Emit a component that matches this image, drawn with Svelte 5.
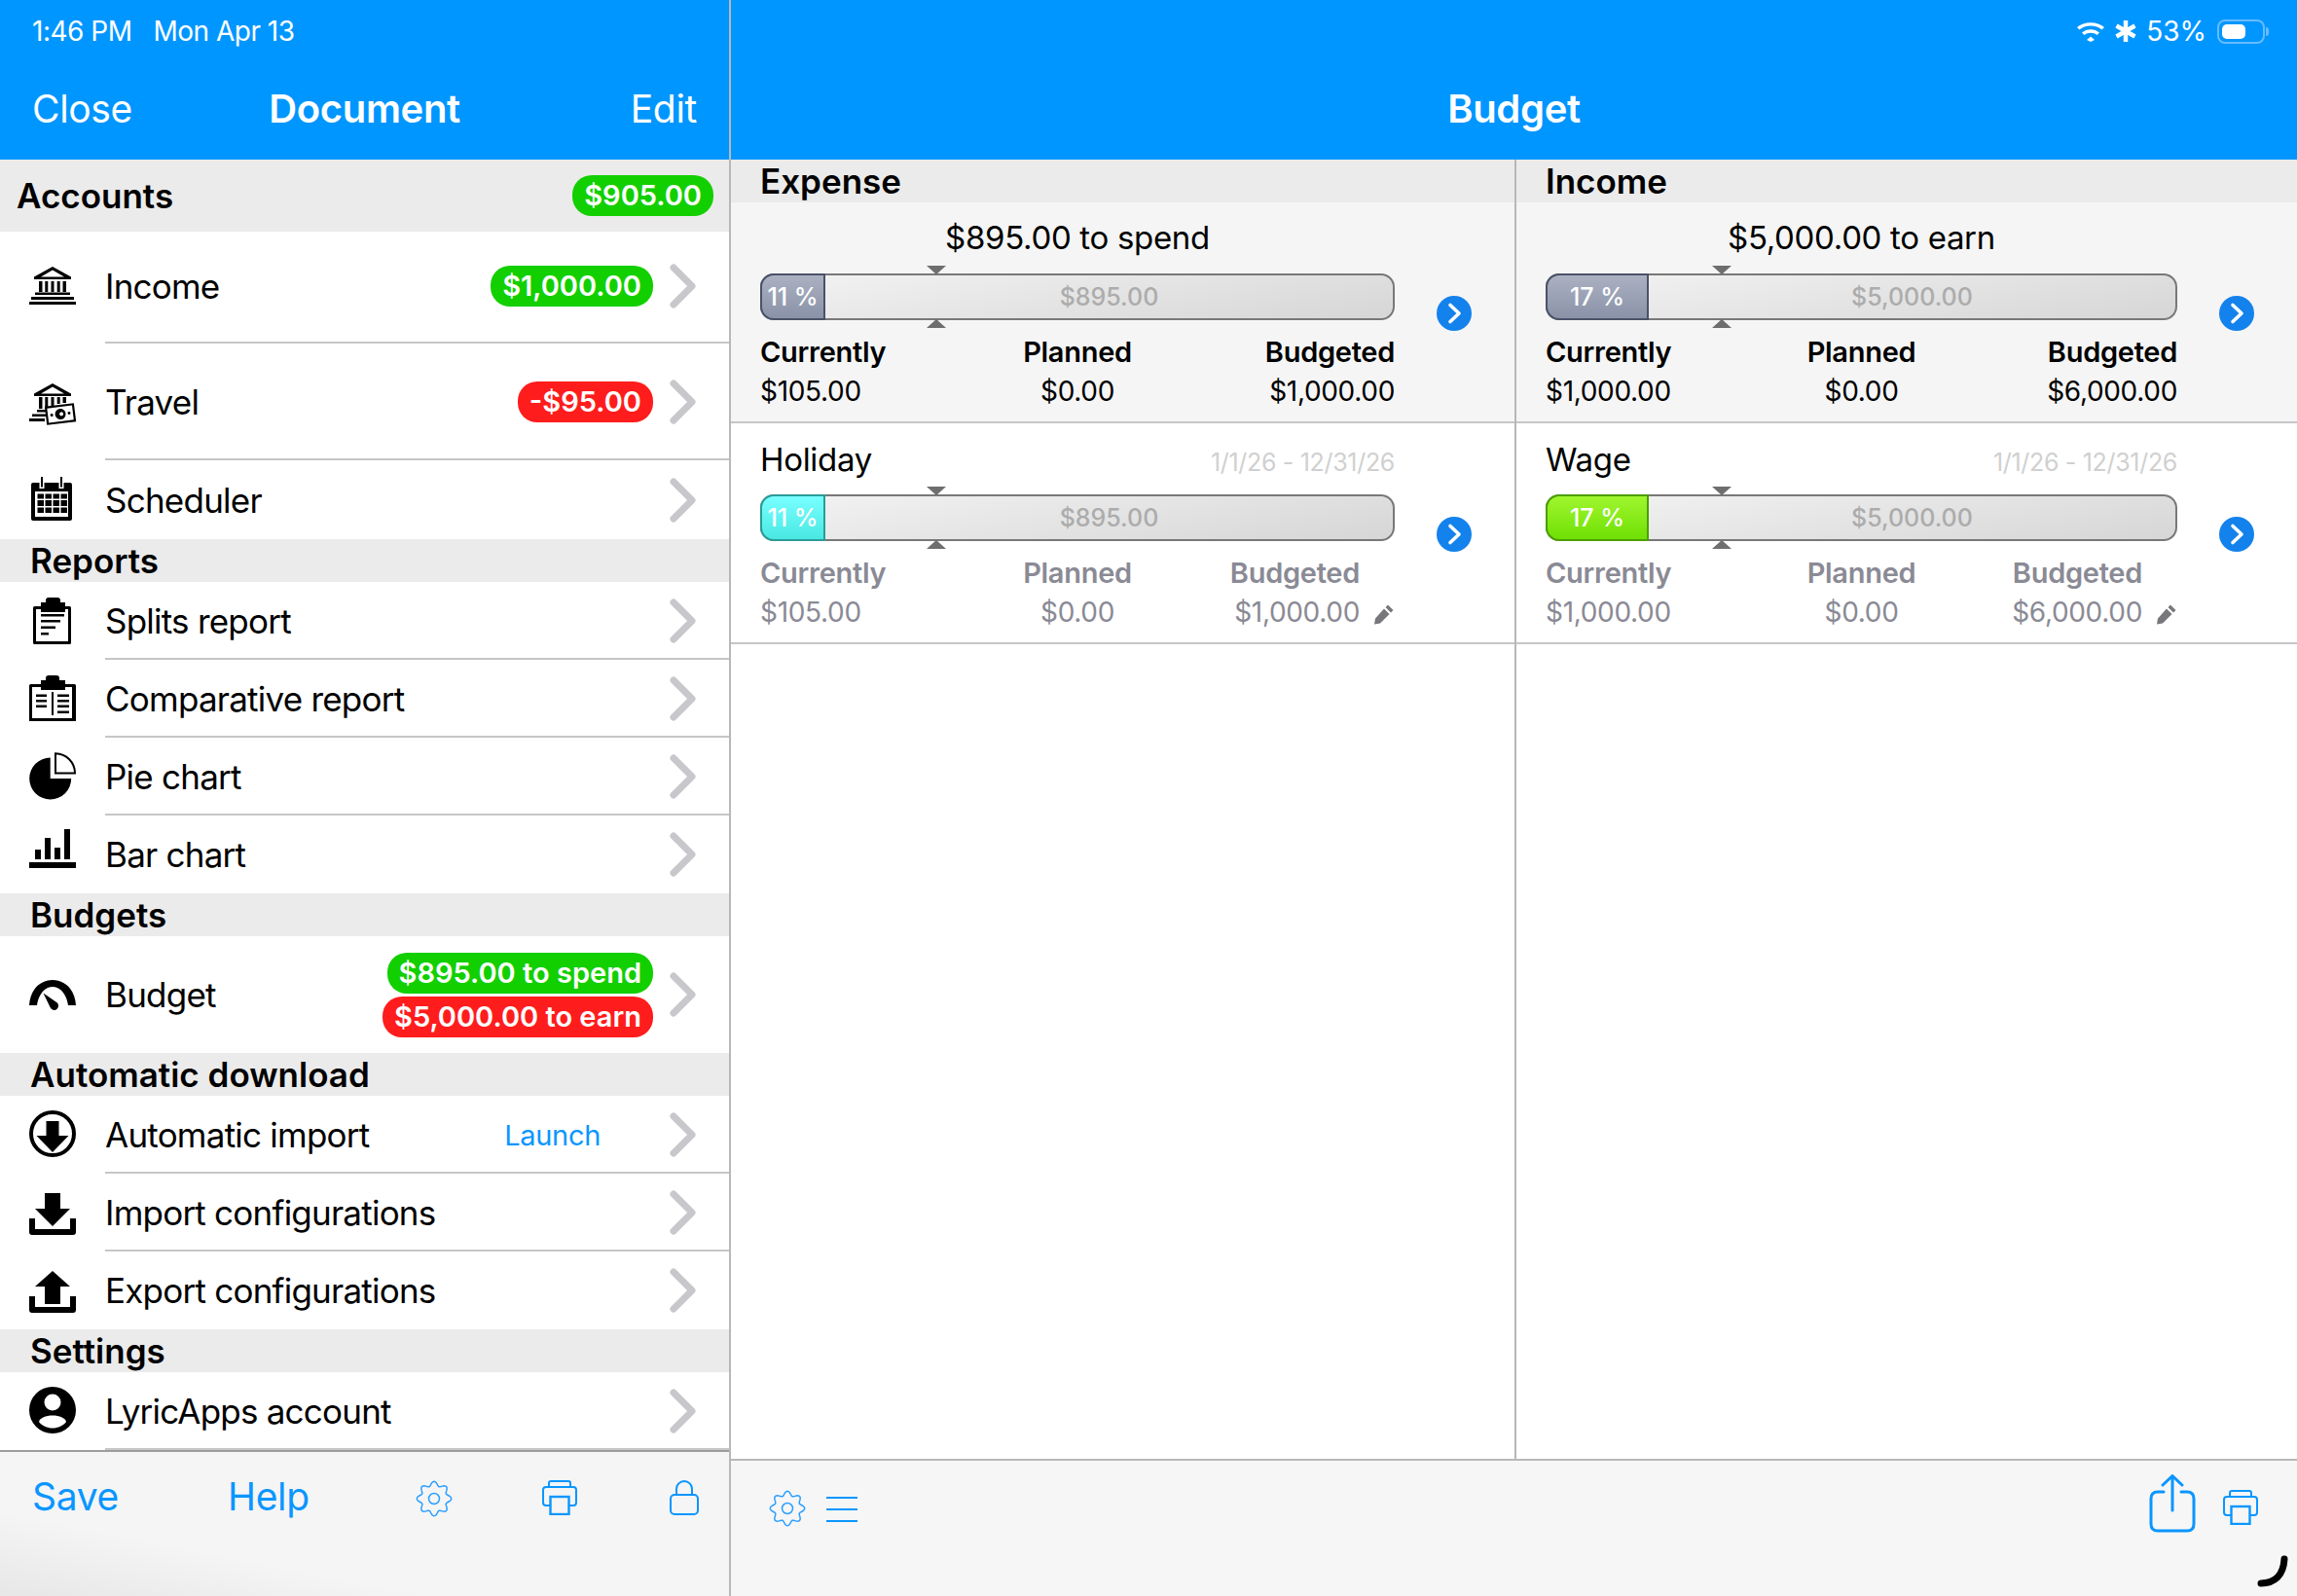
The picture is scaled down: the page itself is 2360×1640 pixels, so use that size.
<script>
	const sections = [
		{
			title: 'Accounts',
			lead: true,
			total: '$905.00',
			rows: [
				{ label: 'Income', icon: 'bank', h: 115, lift: true, badges: [{ text: '$1,000.00', tone: 'green' }] },
				{ label: 'Travel', icon: 'bankcash', h: 120, badges: [{ text: '-$95.00', tone: 'red' }] },
				{ label: 'Scheduler', icon: 'calendar', h: 81, last: true }
			]
		},
		{
			title: 'Reports',
			rows: [
				{ label: 'Splits report', icon: 'clip', h: 80 },
				{ label: 'Comparative report', icon: 'compare', h: 80 },
				{ label: 'Pie chart', icon: 'pie', h: 80 },
				{ label: 'Bar chart', icon: 'bars', h: 80, last: true }
			]
		},
		{
			title: 'Budgets',
			rows: [
				{
					label: 'Budget',
					icon: 'gauge',
					h: 120,
					last: true,
					badges: [
						{ text: '$895.00 to spend', tone: 'green' },
						{ text: '$5,000.00 to earn', tone: 'red' }
					]
				}
			]
		},
		{
			title: 'Automatic download',
			rows: [
				{ label: 'Automatic import', icon: 'circledown', h: 80, action: 'Launch' },
				{ label: 'Import configurations', icon: 'import', h: 80 },
				{ label: 'Export configurations', icon: 'export', h: 80, last: true }
			]
		},
		{
			title: 'Settings',
			rows: [{ label: 'LyricApps account', icon: 'user', h: 80 }]
		}
	];

	const columns = [
		{
			title: 'Expense',
			summary: '$895.00 to spend',
			pct: '11 %',
			fillWidth: 67,
			left: '$895.00',
			currently: '$105.00',
			budgeted: '$1,000.00',
			itemName: 'Holiday',
			itemTone: 'cyan'
		},
		{
			title: 'Income',
			summary: '$5,000.00 to earn',
			pct: '17 %',
			fillWidth: 106,
			left: '$5,000.00',
			currently: '$1,000.00',
			budgeted: '$6,000.00',
			itemName: 'Wage',
			itemTone: 'lime'
		}
	];

	// wavy 8 lobe outline of the settings gear
	function gearPath(cx, cy, r, amp) {
		let d = '';
		for (let i = 0; i < 96; i++) {
			const a = (i / 96) * Math.PI * 2 - Math.PI / 2;
			const rr = r + amp * Math.cos(8 * (a + Math.PI / 2));
			d += (i ? 'L' : 'M') + (cx + rr * Math.cos(a)).toFixed(2) + ' ' + (cy + rr * Math.sin(a)).toFixed(2);
		}
		return d + 'Z';
	}
</script>

{#snippet rowIcon(name)}
	<svg class="row-icon" viewBox="0 0 48 48" width="48" height="48" fill="#000">
		{#if name === 'bank'}
			<path d="M24 5 5 15.500V18h38v-2.500zM24 8.500 12 15.500h24z" fill-rule="evenodd" />
			<path d="M10 20h3.500v11H10zM16.300 20h3v11h-3zM22.500 20h3v11h-3zM28.700 20h3v11h-3zM34.500 20H38v11h-3.500zM6 31.500h36V34H6zM2 36h44v3H2zM0 41h48v3H0z" />
		{:else if name === 'bankcash'}
			<path d="M24 6 5 16.500V19h38v-2.500zM24 9.500 12 16.500h24z" fill-rule="evenodd" />
			<path d="M10 20h3.500v12H10zM16.300 20h3v12h-3zM22.500 20h3v9h-3zM28.700 20h3v7h-3zM34.500 20H38v6h-3.500zM8 33h11v2.500H8zM3 37.500h14v2.500H3zM0 42h16v3H0z" />
			<g transform="rotate(-7 32 37)">
				<rect x="18" y="29" width="28" height="17" fill="#fff" stroke="#000" stroke-width="2.200" />
				<circle cx="32" cy="37.500" r="5.500" />
				<circle cx="33" cy="37.500" r="2" fill="#fff" />
				<circle cx="23" cy="37.500" r="1.500" />
				<circle cx="41" cy="37.500" r="1.500" />
			</g>
		{:else if name === 'calendar'}
			<path d="M4 7h38q2 0 2 2v35q0 2-2 2H4q-2 0-2-2V9q0-2 2-2zM6 16v26h34V16z" fill-rule="evenodd" />
			<path d="M10.500 3.500h5V13h-5zM30.500 3.500h5V13h-5z" fill="#fff" />
			<path d="M12 1h2v10.500h-2zM32 1h2v10.500h-2zM8.500 18.500h6.500v5H8.500zM16.500 18.500H23v5h-6.500zM24.500 18.500H31v5h-6.500zM32.500 18.500H39v5h-6.500zM8.500 25h6.500v6H8.500zM16.500 25H23v6h-6.500zM24.500 25H31v6h-6.500zM32.500 25H39v6h-6.500zM8.500 32.500h6.500V38H8.500zM16.500 32.500H23V38h-6.500zM24.500 32.500H31V38h-6.500zM32.500 32.500H39V38h-6.500z" />
		{:else if name === 'clip'}
			<path d="M5.500 10H12V6h5V4q0-3 3-3h9q3 0 3 3v2h5v4h4.500Q43 10 43 11.500v36q0 1.500-1.500 1.500h-36Q4 49 4 47.500v-36Q4 10 5.500 10zM7 13v33h33V13h-3v3H12v-3z" fill-rule="evenodd" />
			<path d="M12 18h24v2.500H12zM12 24h20v2.500H12zM12 30.500h15V33H12zM12 37h8v2.500h-8z" />
		{:else if name === 'compare'}
			<path d="M1.500 10H12V6h5V4q0-3 3-3h8q3 0 3 3v2h6v4h9.500q1.500 0 1.500 1.500V48H0V11.500Q0 10 1.500 10zM3 13v32h41V13h-7v3H12v-3z" fill-rule="evenodd" />
			<path d="M23 18h2v24h-2zM7 20.500h11V23H7zM7 26h11v2.500H7zM7 31.500h11V34H7zM29 20.500h12V23H29zM29 26h12v2.500H29zM29 31.500h12V34H29zM29 37.500h12V40H29z" />
		{:else if name === 'pie'}
			<path d="M21.700 5.500V27h21.500A21.500 21.500 0 1 1 21.700 5.500z" />
			<path d="M27 1.200V21.500h20A20.300 20.300 0 0 0 27 1.200z" fill="#fff" stroke="#000" stroke-width="2" />
		{:else if name === 'bars'}
			<path d="M6 20h6v10H6zM16 8h6v22h-6zM26 18h6v12h-6zM36-1h6v31h-6zM0 33h48v6H0z" />
		{:else if name === 'gauge'}
			<path d="M0 36C1 20 11 10 24 10s23 10 24 26h-8C38.500 25 32 17 24 17S9.500 25 8 36z" />
			<path d="M14.500 23.500 27.500 32.500a4.400 4.400 0 1 1-6 5.500z" />
		{:else if name === 'circledown'}
			<circle cx="24" cy="24" r="22" fill="none" stroke="#000" stroke-width="4" />
			<path d="M17.500 11h13v15h10L24 43 7.500 26h10z" />
		{:else if name === 'import'}
			<path d="M16 5h16v16h10L24 39 6 21h10z" />
			<path d="M0 31h6v11h36V31h6v14q0 3-3 3H3q-3 0-3-3z" />
		{:else if name === 'export'}
			<path d="M24 5l18 16H32v18H16V21H6z" />
			<path d="M0 31h6v11h36V31h6v14q0 3-3 3H3q-3 0-3-3z" />
		{:else if name === 'user'}
			<circle cx="24" cy="24" r="24" />
			<circle cx="24" cy="16" r="8.500" fill="#fff" />
			<path d="M10 36c1-4 7-6.500 14-6.500s13 2.500 14 6.500c-3 4-8.500 6.500-14 6.500S13 40 10 36z" fill="#fff" />
		{/if}
	</svg>
{/snippet}

{#snippet printerIcon()}
	<svg class="tool-svg" viewBox="0 0 36 36" width="36" height="36" fill="none" stroke="#0a96ff" stroke-width="2">
		<path d="M7 7V3q0-2 2-2h18q2 0 2 2v4" />
		<path d="M8 26H4q-3 0-3-3V10q0-3 3-3h28q3 0 3 3v13q0 3-3 3h-4" />
		<rect x="8.500" y="17" width="19" height="18" stroke-width="2.400" />
	</svg>
{/snippet}

{#snippet gearIcon()}
	<svg class="tool-svg" viewBox="0 0 38 38" width="38" height="38" fill="none" stroke="#2c9fff" stroke-width="1.500">
		<path d={gearPath(19, 19, 15.500, 2.200)} />
		<circle cx="19" cy="19" r="5.500" />
	</svg>
{/snippet}

{#snippet budgetBar(pct, fillWidth, left, tone)}
	<div class="bar">
		<span class="marker marker-top"></span>
		<span class="marker marker-bottom"></span>
		<div class="fill {tone}" style="width: {fillWidth}px">{pct}</div>
		<div class="remain">{left}</div>
	</div>
{/snippet}

{#snippet disclosure()}
	<svg class="more" viewBox="0 0 36 36" width="36" height="36">
		<circle cx="18" cy="18" r="18" fill="#1482ec" />
		<path d="M14 9.500 23 18l-9 8.500" fill="none" stroke="#fff" stroke-width="3.600" stroke-linecap="round" stroke-linejoin="round" />
	</svg>
{/snippet}

<div class="app">
	<aside class="side">
		<header class="nav">
			<div class="status"><span>1:46 PM</span><span class="date">Mon Apr 13</span></div>
			<div class="navbar">
				<span>Close</span>
				<strong class="nav-title">Document</strong>
				<span class="nav-end">Edit</span>
			</div>
		</header>

		<div class="list">
			{#each sections as section}
				<div class="section-head" class:lead={section.lead}>
					<span>{section.title}</span>
					{#if section.total}<span class="badge green">{section.total}</span>{/if}
				</div>
				{#each section.rows as row}
					<div class="row" class:last={row.last} class:lift={row.lift} style="height: {row.h}px">
						{@render rowIcon(row.icon)}
						<span class="row-label">{row.label}</span>
						{#if row.action}<span class="action">{row.action}</span>{/if}
						{#if row.badges}
							<div class="badges">
								{#each row.badges as b}<span class="badge {b.tone}">{b.text}</span>{/each}
							</div>
						{/if}
						<svg class="chev" viewBox="0 0 27 46" width="27" height="46">
							<path d="M4 4l19 19L4 42" fill="none" stroke="#c7c7cc" stroke-width="7" stroke-linecap="round" stroke-linejoin="round" />
						</svg>
					</div>
				{/each}
			{/each}
		</div>

		<footer class="side-tools">
			<span class="tool-text save">Save</span>
			<span class="tool-text help">Help</span>
			<span class="gear-slot">{@render gearIcon()}</span>
			<span class="print-slot">{@render printerIcon()}</span>
			<svg class="tool-svg" viewBox="0 0 30 36" width="30" height="36" fill="none" stroke="#0a96ff" stroke-width="2">
				<path d="M7 15V9a8 8 0 0 1 16 0v6" />
				<rect x="1" y="15" width="28" height="20" rx="4" />
			</svg>
		</footer>
	</aside>

	<main class="main">
		<header class="nav">
			<div class="status status-right">
				<svg viewBox="0 0 30 22" width="30" height="22" fill="#fff">
					<path d="M15 16.500l4 3.500-4 2-4-2z" />
					<path d="M6 12.500c5-4.500 13-4.500 18 0l-2.500 2.500c-3.500-3-9.500-3-13 0z" />
					<path d="M1 7C8 .5 22 .5 29 7l-2.500 2.500C20.500 4 9.500 4 3.500 9.500z" />
				</svg>
				<svg viewBox="0 0 22 22" width="22" height="22" fill="none" stroke="#fff" stroke-width="4.500">
					<path d="M11 0v22M1.500 5.500l19 11M1.500 16.500l19-11" />
				</svg>
				<span class="battery-text">53%</span>
				<span class="battery"><span class="battery-level"></span></span>
			</div>
			<div class="navbar navbar-center"><strong>Budget</strong></div>
		</header>

		<div class="columns">
			{#each columns as col}
				<section class="col">
					<h2 class="col-head">{col.title}</h2>
					<div class="budget summary">
						<div class="budget-body">
							<div class="summary-title">{col.summary}</div>
							{@render budgetBar(col.pct, col.fillWidth, col.left, 'slate')}
							<div class="figures">
								<div><b>Currently</b><span>{col.currently}</span></div>
								<div class="mid"><b>Planned</b><span>$0.00</span></div>
								<div class="end"><b>Budgeted</b><span>{col.budgeted}</span></div>
							</div>
						</div>
						{@render disclosure()}
					</div>
					<div class="budget item">
						<div class="budget-body">
							<div class="item-head">
								<span class="item-name">{col.itemName}</span>
								<span class="dates">1/1/26 - 12/31/26</span>
							</div>
							{@render budgetBar(col.pct, col.fillWidth, col.left, col.itemTone)}
							<div class="figures">
								<div><b>Currently</b><span>{col.currently}</span></div>
								<div class="mid"><b>Planned</b><span>$0.00</span></div>
								<div class="end with-pencil">
									<b>Budgeted</b>
									<span>{col.budgeted}</span>
									<svg class="pencil" viewBox="0 0 22 22" width="22" height="22">
										<path d="M15 1.500l5.500 5.500-2.500 2.500L12.500 4zM11 5.500 16.500 11 7 20.500 1 21.500l1-6z" fill="#77777c" />
									</svg>
								</div>
							</div>
						</div>
						{@render disclosure()}
					</div>
				</section>
			{/each}
		</div>

		<footer class="main-tools">
			<div class="tools-left">
				{@render gearIcon()}
				<span class="burger"><i></i><i></i><i></i></span>
			</div>
			<div class="tools-right">
				<svg class="share" viewBox="0 0 48 60" width="48" height="60" fill="none" stroke="#0a96ff" stroke-width="3" stroke-linecap="round" stroke-linejoin="round">
					<path d="M24 37V2M14 11 24 1.500 34 11" />
					<path d="M15 18H9q-7 0-7 7v26q0 7 7 7h30q7 0 7-7V25q0-7-7-7h-6" />
				</svg>
				{@render printerIcon()}
			</div>
			<svg class="grabber" viewBox="0 0 34 34" width="34" height="34" fill="none" stroke="#000" stroke-width="7" stroke-linecap="round">
				<path d="M5 29c14 0 23-8 24-25" />
			</svg>
		</footer>
	</main>
</div>

<style>
	:global(body) {
		margin: 0;
		background: #fff;
	}
	.app {
		display: flex;
		width: 2360px;
		height: 1640px;
		overflow: hidden;
		font-family: Inter, 'Liberation Sans', sans-serif;
		color: #000;
		letter-spacing: -0.02em;
	}
	.side {
		width: 749px;
		flex: none;
		display: flex;
		flex-direction: column;
		border-right: 2px solid #b8b8b8;
	}
	.main {
		flex: 1;
		display: flex;
		flex-direction: column;
		min-width: 0;
	}
	.nav {
		height: 164px;
		flex: none;
		box-sizing: border-box;
		background: #0096ff;
		color: #fff;
	}
	.status {
		height: 64px;
		display: flex;
		align-items: center;
		padding-left: 33px;
		font-size: 28px;
		letter-spacing: -0.018em;
	}
	.date {
		margin-left: 22px;
	}
	.status-right {
		justify-content: flex-end;
		gap: 10px;
		padding: 0 33px 0 0;
		letter-spacing: 0;
	}
	.battery-text {
		font-size: 28px;
	}
	.battery {
		position: relative;
		box-sizing: border-box;
		width: 49px;
		height: 25px;
		margin-left: 1px;
		padding: 3px;
		border: 2px solid #66bbff;
		border-radius: 8px;
	}
	.battery::after {
		content: '';
		position: absolute;
		left: 48px;
		top: 6px;
		width: 3px;
		height: 9px;
		background: #66bbff;
		border-radius: 0 3px 3px 0;
	}
	.battery-level {
		display: block;
		width: 24px;
		height: 15px;
		background: #fff;
		border-radius: 5px;
	}
	.navbar {
		height: 94px;
		display: grid;
		grid-template-columns: 1fr auto 1fr;
		align-items: center;
		padding: 0 33px;
		font-size: 39px;
	}
	.nav-end {
		justify-self: end;
	}
	.nav-title,
	.navbar-center strong {
		font-size: 40px;
		font-weight: 600;
	}
	.navbar-center {
		grid-template-columns: 1fr;
		justify-items: center;
		padding: 0;
	}
	.list {
		flex: 1;
		min-height: 0;
		background: #fff;
	}
	.section-head {
		height: 44px;
		display: flex;
		align-items: center;
		justify-content: space-between;
		padding: 0 16px 0 31px;
		background: #ebebeb;
		font-size: 35px;
		font-weight: 600;
		letter-spacing: 0;
	}
	.section-head.lead {
		height: 74px;
		padding-left: 17px;
	}
	.row {
		position: relative;
		display: flex;
		align-items: center;
		padding: 0 34px 0 30px;
		box-sizing: border-box;
	}
	.row.lift {
		padding-bottom: 3px;
	}
	.row::after {
		content: '';
		position: absolute;
		left: 108px;
		right: 0;
		bottom: 0;
		height: 2px;
		background: #c6c6c8;
	}
	.row.last::after {
		display: none;
	}
	.row-icon {
		flex: none;
		margin: 0 30px 2px 0;
		overflow: visible;
	}
	.row-label {
		font-size: 35px;
		letter-spacing: -0.022em;
		flex: 1;
		min-width: 0;
		white-space: nowrap;
	}
	.action {
		font-size: 29px;
		color: #0a96ff;
		margin-right: 54px;
	}
	.badges {
		display: flex;
		flex-direction: column;
		align-items: flex-end;
		gap: 3px;
	}
	.badge {
		display: inline-block;
		height: 42px;
		line-height: 41px;
		padding: 0 12px;
		border-radius: 20px;
		font-size: 29px;
		font-weight: 600;
		color: #fff;
		letter-spacing: 0;
	}
	.green {
		background: #12cf00;
	}
	.red {
		background: #ff1c1c;
	}
	.chev {
		flex: none;
		margin-left: 17px;
	}
	.side-tools {
		height: 150px;
		flex: none;
		box-sizing: border-box;
		border-top: 2px solid #9d9d9d;
		display: flex;
		align-items: flex-start;
		padding: 29px 31px 0 33px;
		background: linear-gradient(to top right, #e7e7e7, #f5f5f5 30%);
		color: #0a96ff;
	}
	.tool-text {
		font-size: 39px;
		line-height: 46px;
		margin-top: -6px;
	}
	.help {
		margin-left: 112px;
	}
	.gear-slot {
		margin-left: auto;
	}
	.print-slot {
		margin: 0 95px 0 92px;
	}
	.tool-svg {
		display: block;
	}
	.columns {
		flex: 1;
		min-height: 0;
		display: flex;
	}
	.col {
		flex: 1;
		min-width: 0;
		border-right: 2px solid #b8b8b8;
	}
	.col:last-child {
		border-right: 0;
	}
	.col:first-child {
		flex: 0 0 805px;
	}
	.col-head {
		margin: 0;
		height: 44px;
		line-height: 45px;
		padding-left: 30px;
		background: #ebebeb;
		font-size: 35px;
		font-weight: 600;
		letter-spacing: 0;
	}
	.budget {
		height: 227px;
		box-sizing: border-box;
		display: grid;
		grid-template-columns: 1fr 36px;
		column-gap: 43px;
		align-items: start;
		padding: 0 44px 0 30px;
		border-bottom: 2px solid #c6c6c8;
	}
	.summary {
		background: #f5f5f5;
	}
	.more {
		margin-top: 96px;
	}
	.summary-title {
		height: 73px;
		line-height: 72px;
		text-align: center;
		font-size: 33px;
	}
	.item-head {
		height: 73px;
		display: flex;
		justify-content: space-between;
		align-items: center;
	}
	.item-name {
		font-size: 33px;
	}
	.dates {
		font-size: 25px;
		color: #d0d0d0;
		margin-top: 7px;
	}
	.bar {
		position: relative;
		display: flex;
		height: 48px;
		box-sizing: border-box;
		border: 2px solid #787878;
		border-radius: 14px;
		background: linear-gradient(170deg, #f3f3f3, #d6d6d6);
	}
	.marker {
		position: absolute;
		left: 169px;
		width: 0;
		height: 0;
		border-left: 10px solid transparent;
		border-right: 10px solid transparent;
	}
	.marker-top {
		top: -10px;
		border-top: 9px solid #6e6e6e;
	}
	.marker-bottom {
		bottom: -10px;
		border-bottom: 9px solid #6e6e6e;
	}
	.fill {
		flex: none;
		margin: -2px 0 -2px -2px;
		box-sizing: border-box;
		display: flex;
		align-items: center;
		justify-content: center;
		border: 2px solid;
		border-radius: 14px 0 0 14px;
		font-size: 25px;
		font-weight: 500;
		color: #fff;
		letter-spacing: 0;
	}
	.slate {
		background: linear-gradient(#abb1c1, #8a92a8);
		border-color: #4a5268;
	}
	.cyan {
		background: linear-gradient(#78ffff, #4ae8e2);
		border-color: #2a9c98;
	}
	.lime {
		background: linear-gradient(#a0f62e, #6fe004);
		border-color: #4c9e00;
	}
	.remain {
		flex: 1;
		text-align: center;
		line-height: 44px;
		font-size: 25px;
		font-weight: 500;
		color: #acacac;
		letter-spacing: 0;
	}
	.figures {
		display: grid;
		grid-template-columns: 1fr 1fr 1fr;
		margin-top: 13px;
	}
	.figures div {
		display: flex;
		flex-direction: column;
		position: relative;
	}
	.figures b {
		font-size: 29px;
		font-weight: 600;
		line-height: 40px;
		letter-spacing: -0.01em;
	}
	.figures span {
		font-size: 28px;
		line-height: 40px;
	}
	.mid {
		align-items: center;
	}
	.end {
		align-items: flex-end;
	}
	.with-pencil {
		padding-right: 36px;
	}
	.pencil {
		position: absolute;
		right: 0;
		bottom: 7px;
	}
	.item .figures {
		color: #8a8a95;
	}
	.main-tools {
		position: relative;
		height: 141px;
		flex: none;
		box-sizing: border-box;
		border-top: 2px solid #b8b8b8;
		background: #f6f6f6;
		display: flex;
		justify-content: space-between;
		padding: 14px 40px 0 39px;
	}
	.tools-left {
		display: flex;
		align-items: flex-start;
		gap: 21px;
		padding-top: 16px;
	}
	.burger {
		width: 32px;
		display: flex;
		flex-direction: column;
		gap: 10px;
		padding-top: 7px;
	}
	.burger i {
		display: block;
		height: 2px;
		background: #0a96ff;
	}
	.tools-right {
		display: flex;
		align-items: flex-start;
		gap: 28px;
	}
	.tools-right .tool-svg {
		margin-top: 16px;
	}
	.grabber {
		position: absolute;
		right: 8px;
		bottom: 8px;
	}
</style>
